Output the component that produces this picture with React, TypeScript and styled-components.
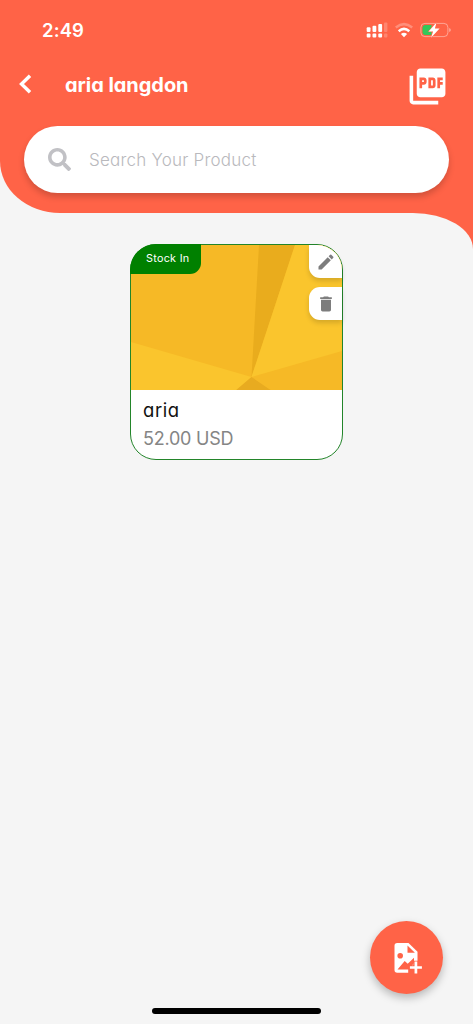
import React from 'react';
import styled, { createGlobalStyle } from 'styled-components';
import { MdPictureAsPdf, MdEdit, MdDelete } from 'react-icons/md';
import { FaSearch } from 'react-icons/fa';

const GlobalStyle = createGlobalStyle`
  * { box-sizing: border-box; }
  body {
    margin: 0;
    background: #f5f5f5;
    font-family: Inter, "Liberation Sans", sans-serif;
    font-feature-settings: "cv11";
  }
  button { border: 0; padding: 0; background: none; font: inherit; cursor: pointer; }
`;

const Screen = styled.div`
  position: relative;
  display: flex;
  flex-direction: column;
  width: 100%;
  height: 1024px;
  overflow: hidden;
  background: #f5f5f5;
`;

const Header = styled.header`
  height: 213px;
  flex: none;
  background: #ff6347;
  border-bottom-left-radius: 60px 52px;
`;

const StatusBar = styled.div`
  display: flex;
  align-items: center;
  justify-content: space-between;
  height: 60px;
  padding: 0 22px 0 42px;
`;

const Clock = styled.span`
  color: #fff;
  font-size: 18.5px;
  font-weight: 600;
  letter-spacing: 0.1px;
`;

const TitleBar = styled.div`
  display: flex;
  align-items: center;
  height: 50px;
  padding: 2px 24px 0 19px;
  color: #fff;
`;

const BackButton = styled.button`
  display: flex;
  width: 14px;
  margin: -5px 32px 0 0;
  color: #fff;
`;

const Title = styled.h1`
  flex: 1;
  margin: -3px 0 0;
  font-size: 20px;
  line-height: 26px;
  font-weight: 700;
  letter-spacing: -0.05px;
`;

const PdfButton = styled.button`
  display: flex;
  color: #fff;
`;

const SearchBox = styled.label`
  display: flex;
  align-items: center;
  height: 67px;
  margin: 15.5px 24px 0;
  padding-left: 24px;
  gap: 18px;
  border-radius: 34px;
  background: #fff;
  color: #c1c1c5;
  box-shadow: 0 4px 6px rgba(0, 0, 0, 0.18);
`;

const SearchInput = styled.input`
  flex: 1;
  border: 0;
  outline: 0;
  padding: 2px 0 0;
  background: transparent;
  font: 300 17px Inter, sans-serif;
  font-feature-settings: "cv11";
  letter-spacing: 0.22px;
  &::placeholder { color: #b9b9bd; opacity: 1; }
`;

const Backdrop = styled.div`
  flex: 1;
  background: linear-gradient(#ff6347, #ff6347) right top / 60px 40px no-repeat;
`;

const Content = styled.main`
  display: flex;
  justify-content: center;
  align-items: flex-start;
  height: 100%;
  padding-top: 31px;
  background: #f5f5f5;
  border-top-right-radius: 60px 36px;
`;

const Card = styled.article`
  position: relative;
  width: 213px;
  height: 216px;
  border: 1px solid #23852a;
  border-radius: 26px;
  background: #fff;
`;

const Photo = styled.svg`
  display: block;
  width: 211px;
  height: 145px;
  border-radius: 25px 25px 0 0;
`;

const StockBadge = styled.span`
  position: absolute;
  top: -1px;
  left: -1px;
  width: 71px;
  height: 30px;
  padding-left: 16px;
  border-radius: 26px 0 11px 0;
  background: #008000;
  color: #fff;
  font-size: 10.8px;
  line-height: 30px;
  letter-spacing: 0.28px;
`;

const Actions = styled.div`
  position: absolute;
  top: 0;
  right: 0;
  display: flex;
  flex-direction: column;
  gap: 9px;
`;

const Action = styled.button<{ $radius: string }>`
  display: flex;
  align-items: center;
  justify-content: center;
  width: 33px;
  height: 33px;
  border-radius: ${(p) => p.$radius};
  background: #fff;
  color: #7d7d7d;
  box-shadow: 0 3px 5px rgba(0, 0, 0, 0.15);
`;

const Details = styled.div`
  padding: 6px 12px;
`;

const Name = styled.div`
  color: #111;
  font-size: 18.5px;
  line-height: 28px;
  letter-spacing: 0.6px;
`;

const Price = styled.div`
  color: #858585;
  font-size: 18px;
  line-height: 30px;
  letter-spacing: -0.22px;
`;

const AddButton = styled.button`
  position: absolute;
  right: 30px;
  bottom: 30px;
  display: flex;
  align-items: center;
  justify-content: center;
  width: 73px;
  height: 73px;
  border-radius: 50%;
  background: #ff6347;
  box-shadow: 0 4px 8px rgba(0, 0, 0, 0.25);
`;

const HomeIndicator = styled.div`
  position: absolute;
  left: 152px;
  bottom: 10px;
  width: 169px;
  height: 6px;
  border-radius: 3px;
  background: #000;
`;

const StatusIcons = () => (
  <svg width="86" height="20" viewBox="365 20 86 20" fill="#fff">
    <rect x="366.7" y="33.5" width="3.8" height="4" rx="1" />
    <rect x="372.5" y="33.5" width="3.8" height="4" rx="1" />
    <rect x="378.3" y="33.5" width="3.8" height="4" rx="1" />
    <rect x="366.7" y="27.3" width="3.8" height="4.6" rx="1" />
    <rect x="372.5" y="25.8" width="3.8" height="6.1" rx="1" />
    <rect x="378.3" y="24" width="3.8" height="7.9" rx="1" />
    <g opacity=".22">
      <rect x="384" y="22.5" width="3.4" height="9.4" rx="1" />
      <rect x="384" y="33.5" width="3.4" height="4" rx="1" />
    </g>
    <g fill="none" stroke="#fff" strokeWidth="2.5">
      <path d="M395.8 27.5Q404 20.8 412.2 27.5" opacity=".28" />
      <path d="M398.7 31.2Q404 26.6 409.3 31.2" />
    </g>
    <path d="M404 37.3l-3.1-3.2q3.1-2.5 6.2 0z" />
    <rect x="420.9" y="23.4" width="27" height="13.2" rx="4" fill="none" stroke="#fff" strokeOpacity=".42" />
    <path d="M449.2 28v4q1.6-.5 1.6-2t-1.6-2z" opacity=".45" />
    <path d="M425.5 25h6v10h-6q-3 0-3-3v-4q0-3 3-3z" fill="#34c759" />
    <path d="M436.5 22.5l-8 8.9h4.6L431 37.8l8.6-9.2h-4.7z" stroke="#ff6347" strokeWidth="1" strokeLinejoin="round" paintOrder="stroke" />
  </svg>
);

export default function App() {
  return (
    <>
      <GlobalStyle />
      <Screen>
        <Header>
          <StatusBar>
            <Clock>2:49</Clock>
            <StatusIcons />
          </StatusBar>
          <TitleBar>
            <BackButton aria-label="Back">
              <svg width="14" height="22" viewBox="0 0 14 22" fill="none" stroke="currentColor" strokeWidth="3.4">
                <path d="M11 2.7L2.500 11l8.500 8.300" />
              </svg>
            </BackButton>
            <Title>aria langdon</Title>
            <PdfButton aria-label="Export PDF"><MdPictureAsPdf size={43} /></PdfButton>
          </TitleBar>
          <SearchBox>
            <FaSearch size={23} />
            <SearchInput placeholder="Search Your Product" />
          </SearchBox>
        </Header>
        <Backdrop>
          <Content>
            <Card>
              <Photo viewBox="0 0 211 145" preserveAspectRatio="none">
                <rect width="211" height="146" fill="#f6b926" />
                <path d="M128 0h36L120.500 132z" fill="#e9ac1d" />
                <path d="M164 0h47v106l-90.500 26z" fill="#fac52d" />
                <path d="M0 97l120.500 35L105 146H0z" fill="#fac52d" />
                <path d="M120.500 132L104 146h37z" fill="#e8ab20" />
              </Photo>
              <StockBadge>Stock In</StockBadge>
              <Actions>
                <Action $radius="0 25px 0 11px" aria-label="Edit"><MdEdit size={20} /></Action>
                <Action $radius="11px 0 0 11px" aria-label="Delete"><MdDelete size={20} /></Action>
              </Actions>
              <Details>
                <Name>aria</Name>
                <Price>52.00 USD</Price>
              </Details>
            </Card>
          </Content>
        </Backdrop>
        <AddButton aria-label="Add product image">
          <svg width="30" height="32" viewBox="392 941.500 30 32">
            <path d="M397.200 942.500h11.300l9 8.700v21h-20.300q-2.700 0-2.700-2.700v-24.300q0-2.700 2.700-2.700z" fill="#fff" />
            <path d="M407.500 945v7.200h7.400z" fill="#ff6347" />
            <circle cx="400.200" cy="955.300" r="2.800" fill="#ff6347" />
            <path d="M397.500 969l7.200-8.500 3 2.700 6.300-6v4.800l-4 7z" fill="#ff6347" />
            <path d="M408.200 973.500v-8.700h5v-4.600h5.500v13.300z" fill="#ff6347" />
            <path d="M415.900 961v12M409.900 967h12" stroke="#fff" strokeWidth="2.700" />
          </svg>
        </AddButton>
        <HomeIndicator />
      </Screen>
    </>
  );
}
